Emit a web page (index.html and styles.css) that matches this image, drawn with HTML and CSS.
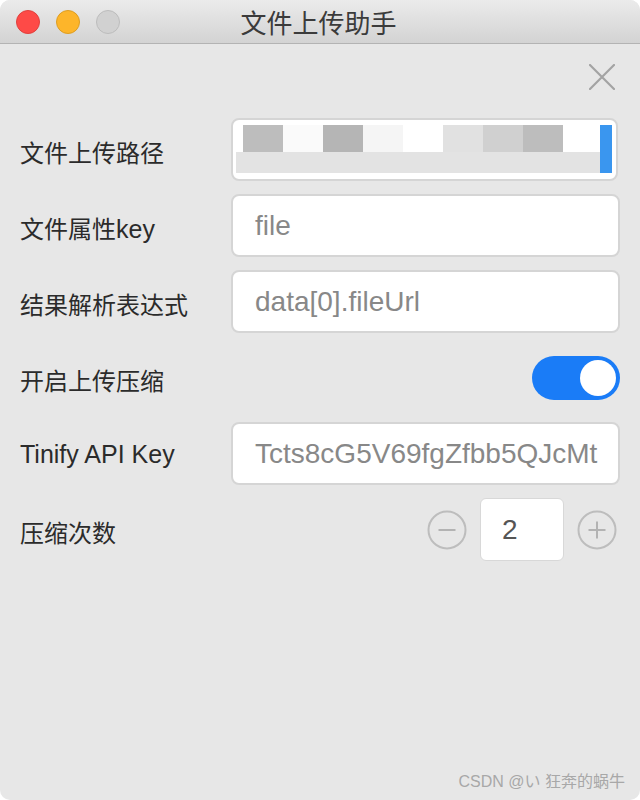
FILE: index.html
```html
<!DOCTYPE html>
<html lang="zh-CN">
<head>
<meta charset="utf-8">
<title>文件上传助手</title>
<link rel="stylesheet" href="styles.css">
</head>
<body>
<div class="window">
  <div class="titlebar">
    <div class="lights">
      <span class="light red"></span>
      <span class="light yellow"></span>
      <span class="light gray"></span>
    </div>
    <div class="title">文件上传助手</div>
  </div>
  <div class="content">
    <div class="close-row">
      <svg class="close" width="26" height="26" viewBox="0 0 26 26"><path d="M1 1 L25 25 M25 1 L1 25" stroke="#a3a3a3" stroke-width="2.2" fill="none" stroke-linecap="round"/></svg>
    </div>
    <div class="form">
      <div class="row">
        <div class="label">文件上传路径</div>
        <div class="field preview-field">
          <div class="preview">
            <div class="preview-img">
              <div class="prow top">
                <span class="pad"></span>
                <span class="blk" style="background:#bdbdbd"></span>
                <span class="blk" style="background:#fafafa"></span>
                <span class="blk" style="background:#b5b5b5"></span>
                <span class="blk" style="background:#f5f5f5"></span>
                <span class="blk" style="background:#ffffff"></span>
                <span class="blk" style="background:#e1e1e1"></span>
                <span class="blk" style="background:#d0d0d0"></span>
                <span class="blk" style="background:#bdbdbd"></span>
                <span class="blk last" style="background:#ffffff"></span>
              </div>
              <div class="prow bottom"></div>
            </div>
            <div class="scrollbar"></div>
          </div>
        </div>
      </div>
      <div class="row">
        <div class="label">文件属性<span class="latin">key</span></div>
        <div class="field">file</div>
      </div>
      <div class="row">
        <div class="label">结果解析表达式</div>
        <div class="field">data[0].fileUrl</div>
      </div>
      <div class="row">
        <div class="label">开启上传压缩</div>
        <div class="right">
          <div class="toggle"><span class="knob"></span></div>
        </div>
      </div>
      <div class="row">
        <div class="label latin">Tinify API Key</div>
        <div class="field">Tcts8cG5V69fgZfbb5QJcMt</div>
      </div>
      <div class="row">
        <div class="label">压缩次数</div>
        <div class="right stepper">
          <svg class="step-btn" width="40" height="40" viewBox="0 0 40 40"><circle cx="20" cy="20" r="18.5" stroke="#bdbdbd" stroke-width="2" fill="none"/><path d="M11.5 20 H28.5" stroke="#b3b3b3" stroke-width="2"/></svg>
          <div class="num">2</div>
          <svg class="step-btn" width="40" height="40" viewBox="0 0 40 40"><circle cx="20" cy="20" r="18.5" stroke="#bdbdbd" stroke-width="2" fill="none"/><path d="M11.5 20 H28.5 M20 11.5 V28.5" stroke="#b3b3b3" stroke-width="2"/></svg>
        </div>
      </div>
    </div>
    <div class="footer">CSDN @い 狂奔的蜗牛</div>
  </div>
</div>
</body>
</html>
```
FILE: styles.css
```css
* { box-sizing: border-box; }
html, body { margin: 0; padding: 0; background: #ffffff; }
body { font-family: "Liberation Sans", "Noto Sans CJK SC", sans-serif; }

.window {
  width: 640px;
  height: 800px;
  border-radius: 10px;
  overflow: hidden;
  background: #e7e7e7;
  display: flex;
  flex-direction: column;
}

.titlebar {
  height: 44px;
  flex: none;
  background: linear-gradient(#ebebeb, #d3d3d3);
  border-bottom: 1px solid #b3b3b3;
  display: flex;
  align-items: center;
  position: relative;
}
.lights {
  display: flex;
  gap: 16px;
  padding-left: 16px;
}
.light {
  width: 24px;
  height: 24px;
  border-radius: 50%;
  display: block;
}
.light.red { background: #fe4a47; border: 1px solid #e0403d; }
.light.yellow { background: #fdb52a; border: 1px solid #dd9d22; }
.light.gray { background: #d1d1d1; border: 1px solid #bcbcbc; }
.title {
  position: absolute;
  left: 0;
  right: 0;
  top: 0;
  bottom: 0;
  display: flex;
  align-items: center;
  justify-content: center;
  font-size: 26px;
  color: #3b3b3b;
  padding-right: 3px;
  pointer-events: none;
}

.content {
  flex: 1;
  display: flex;
  flex-direction: column;
  padding: 0 20px;
}

.close-row {
  height: 74px;
  display: flex;
  justify-content: flex-end;
  padding-top: 20px;
  padding-right: 5px;
}

.form {
  display: flex;
  flex-direction: column;
  gap: 13px;
}
.row {
  height: 63px;
  display: grid;
  grid-template-columns: 211px minmax(0, 1fr);
  align-items: center;
}
.label {
  font-size: 24px;
  color: #2b2b2b;
  white-space: nowrap;
  padding-top: 3px;
}
.latin { font-size: 25px; }
.label.latin { padding-top: 2px; }
.field {
  height: 63px;
  background: #ffffff;
  border: 2px solid #d5d5d5;
  border-radius: 8px;
  padding: 0 20px 0 22px;
  display: flex;
  align-items: center;
  font-size: 28px;
  color: #888888;
  white-space: nowrap;
  overflow: hidden;
}
.preview-field {
  padding: 5px 4px 6px 3px;
  margin-right: 2px;
  align-items: stretch;
}
.preview {
  flex: 1;
  min-width: 0;
  display: flex;
}
.preview-img {
  flex: 1;
  min-width: 0;
  display: flex;
  flex-direction: column;
}
.prow.top {
  height: 27px;
  display: flex;
  background: #ffffff;
}
.prow.top .pad { width: 7px; flex: none; }
.prow.top .blk { width: 40px; flex: none; }
.prow.top .blk.last { flex: 1; width: auto; }
.prow.bottom {
  height: 21px;
  background: #e3e3e3;
}
.scrollbar {
  width: 12px;
  flex: none;
  background: #3a96ef;
}

.right {
  display: flex;
  justify-content: flex-end;
  align-items: center;
}
.toggle {
  width: 88px;
  height: 44px;
  border-radius: 22px;
  background: #1a7cf7;
  display: flex;
  justify-content: flex-end;
  align-items: center;
  padding-right: 4px;
}
.knob {
  width: 36px;
  height: 36px;
  border-radius: 50%;
  background: #ffffff;
  display: block;
}

.stepper { gap: 13px; padding-right: 3px; }
.step-btn { display: block; }
.num {
  width: 84px;
  height: 63px;
  background: #ffffff;
  border: 1.5px solid #d8d8d8;
  border-radius: 6px;
  display: flex;
  align-items: center;
  justify-content: flex-start;
  padding-left: 21px;
  font-size: 28px;
  color: #555555;
}

.footer {
  margin-top: auto;
  text-align: right;
  font-size: 16px;
  line-height: 18px;
  color: #a8a8a8;
  margin-right: -5px;
  padding-bottom: 9px;
}
```
